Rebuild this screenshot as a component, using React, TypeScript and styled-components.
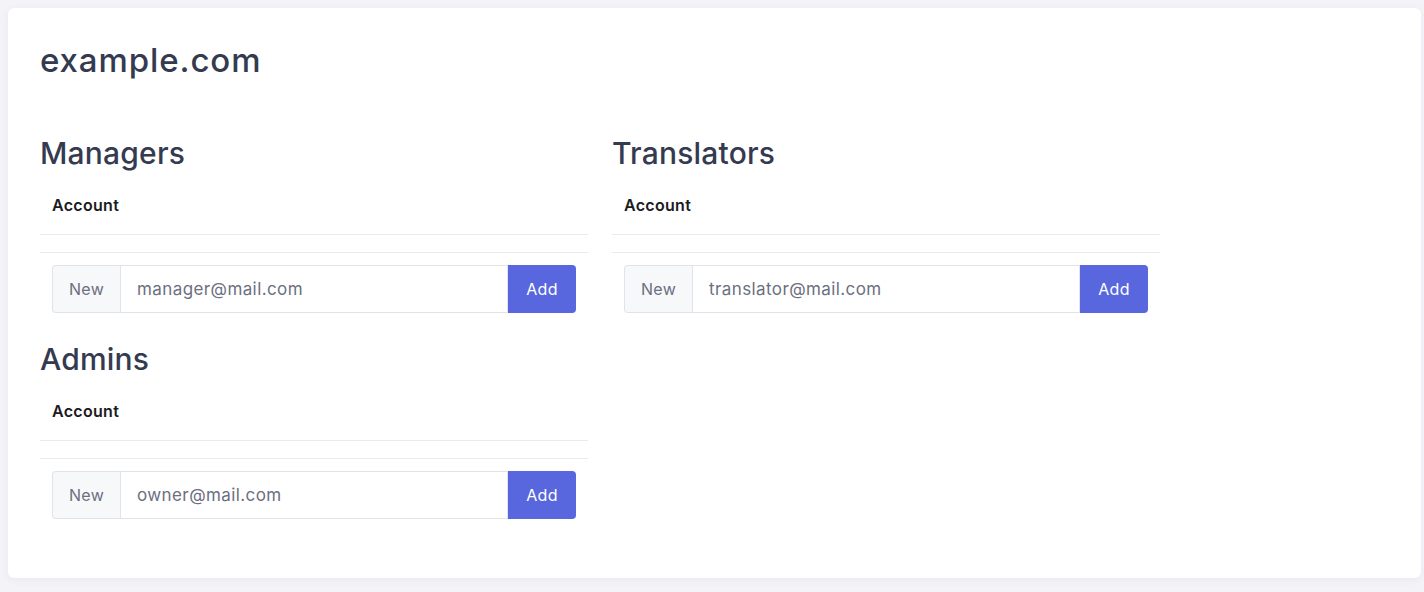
import React from "react";
import styled, { createGlobalStyle } from "styled-components";

const Global = createGlobalStyle`
  html, body { margin: 0; padding: 0; }
  body {
    background: #f3f3f8;
    font-family: "Inter", "Noto Sans", sans-serif;
    color: #343a50;
  }
  * { box-sizing: border-box; }
`;

const Page = styled.div`
  padding: 8px 3px 14px 8px;
`;

const Card = styled.div`
  background: #ffffff;
  border-radius: 6px;
  box-shadow: 0 2px 10px rgba(40, 40, 90, 0.05);
  padding: 32px 32px 52px 32px;
  min-height: 570px;
`;

const Title = styled.h1`
  margin: 0 0 56px 0;
  font-size: 33px;
  font-weight: 500;
  line-height: 40px;
  color: #343a50;
  letter-spacing: 0.9px;
`;

const Columns = styled.div`
  display: grid;
  grid-template-columns: 548px 548px;
  column-gap: 24px;
  align-items: start;
`;

const Column = styled.div`
  display: flex;
  flex-direction: column;
  gap: 29px;
`;

const Section = styled.section`
  display: flex;
  flex-direction: column;
`;

const Heading = styled.h3`
  margin: 0 0 6px 0;
  font-size: 30px;
  font-weight: 500;
  line-height: 34px;
  color: #343a50;
  letter-spacing: 0.2px;
`;

const Table = styled.table`
  width: 100%;
  border-collapse: collapse;
  margin-bottom: 12px;
`;

const Th = styled.th`
  text-align: left;
  padding: 17px 12px 16px 12px;
  font-size: 16px;
  font-weight: 600;
  line-height: 25px;
  color: #1b1b1f;
  letter-spacing: 0.3px;
  border-bottom: 1px solid #e9e9ef;
`;

const EmptyRow = styled.td`
  height: 18px;
  padding: 0;
  border-bottom: 1px solid #e9e9ef;
`;

const InputGroup = styled.div`
  display: flex;
  margin: 0 12px;
  height: 48px;
`;

const Addon = styled.span`
  display: flex;
  align-items: center;
  justify-content: center;
  width: 68px;
  background: #f7f8fa;
  border: 1px solid #e2e3ea;
  border-right: none;
  border-radius: 4px 0 0 4px;
  color: #6c6f80;
  font-size: 16px;
  letter-spacing: 0.3px;
`;

const Input = styled.input`
  flex: 1;
  min-width: 0;
  border: 1px solid #e2e3ea;
  padding: 0 16px;
  font-family: inherit;
  font-size: 17px;
  letter-spacing: 0.4px;
  color: #343a50;
  outline: none;
  &::placeholder { color: #6c6f80; }
`;

const AddButton = styled.button`
  width: 68px;
  border: none;
  border-radius: 0 4px 4px 0;
  background: #5867dd;
  color: #ffffff;
  font-family: inherit;
  font-size: 16px;
  letter-spacing: 0.3px;
  cursor: pointer;
`;

const Spacer = styled.div``;

function RoleSection({ title, placeholder }: { title: string; placeholder: string }) {
  return (
    <Section>
      <Heading>{title}</Heading>
      <Table>
        <thead>
          <tr>
            <Th>Account</Th>
          </tr>
        </thead>
        <tbody>
          <tr>
            <EmptyRow />
          </tr>
        </tbody>
      </Table>
      <InputGroup>
        <Addon>New</Addon>
        <Input placeholder={placeholder} />
        <AddButton>Add</AddButton>
      </InputGroup>
    </Section>
  );
}

export default function App() {
  return (
    <>
      <Global />
      <Page>
        <Card>
          <Title>example.com</Title>
          <Columns>
            <Column>
              <RoleSection title="Managers" placeholder="manager@mail.com" />
              <RoleSection title="Admins" placeholder="owner@mail.com" />
            </Column>
            <Column>
              <RoleSection title="Translators" placeholder="translator@mail.com" />
              <Spacer />
            </Column>
          </Columns>
        </Card>
      </Page>
    </>
  );
}
